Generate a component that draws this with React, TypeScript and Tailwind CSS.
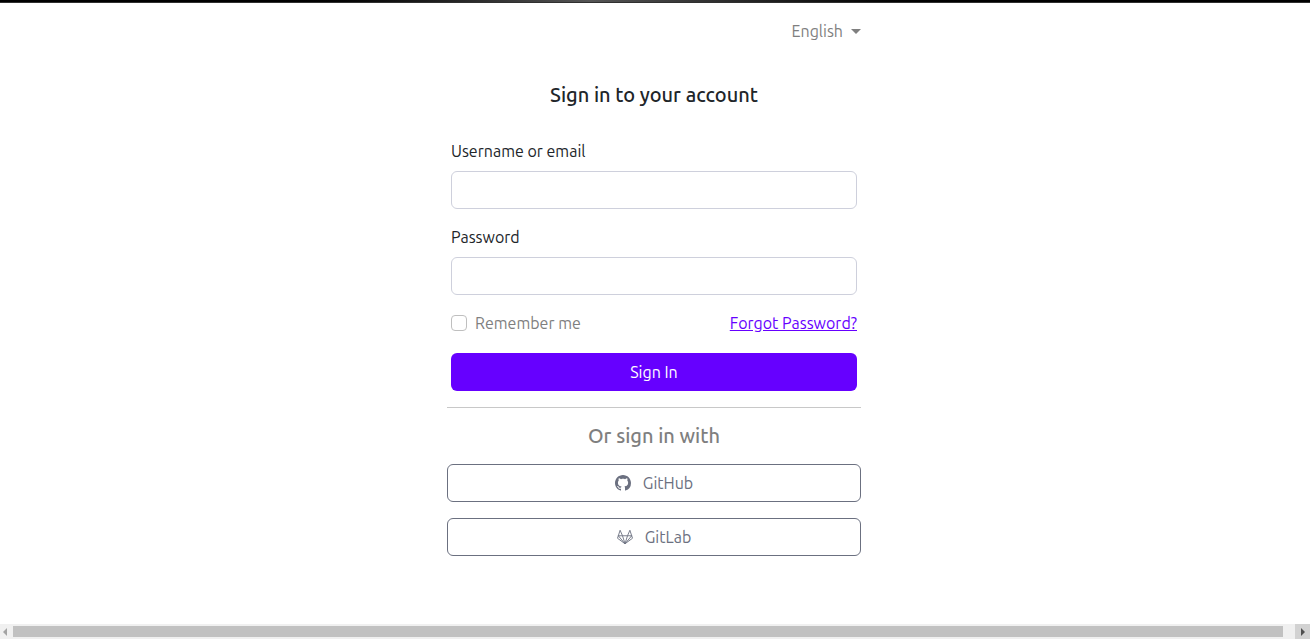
import { useState } from 'react';
import type { ReactNode } from 'react';
import { BsGithub } from 'react-icons/bs';

function GitLabIcon() {
  return (
    <svg viewBox="0 0 32 32" className="h-4 w-4" fill="none" stroke="currentColor" strokeWidth="1.8" strokeLinejoin="round" aria-hidden="true">
      <path d="M16 29.5 1 18.5 6.2 2.5 11 13.5H21L25.8 2.5 31 18.5Z" />
      <path d="M16 29.5 11 13.5M16 29.5 21 13.5M16 29.5 2.6 13.5H11M16 29.5 29.4 13.5H21" />
    </svg>
  );
}

function Field({ id, label, type }: { id: string; label: string; type: string }) {
  return (
    <div className="mb-4 flex flex-col gap-2">
      <label htmlFor={id}>{label}</label>
      <input
        id={id}
        type={type}
        className="h-[38px] w-full rounded-md border border-[#ced0dc] bg-white px-3 outline-none focus:border-[#6600ff]"
      />
    </div>
  );
}

function ProviderButton({ icon, name }: { icon: ReactNode; name: string }) {
  return (
    <button
      type="button"
      className="flex h-[38px] w-full items-center justify-center gap-3 rounded-md border border-[#6b7080] text-[#6b7080] hover:bg-gray-50"
    >
      {icon}
      {name}
    </button>
  );
}

export default function App() {
  const [language, setLanguage] = useState('English');
  return (
    <div className="flex min-h-screen flex-col bg-white font-['Ubuntu','Noto_Sans',sans-serif] text-base leading-6 text-[#212529]">
      <div className="h-[3px] border-b border-[#303030] bg-linear-to-r from-black from-20% via-[#555555] via-45% to-black to-75%" />
      <main className="flex-1 pr-0.5">
        <div className="mx-auto w-full max-w-[414px] pt-4">
          <div className="mb-10 flex justify-end">
            <label className="flex items-center gap-2 text-[#7f7f7f]">
              <select
                aria-label="Language"
                value={language}
                onChange={(event) => setLanguage(event.target.value)}
                className="field-sizing-content appearance-none bg-transparent outline-none"
              >
                <option>English</option>
              </select>
              <svg viewBox="0 0 10 5" className="h-[5px] w-2.5" fill="currentColor" aria-hidden="true">
                <path d="M0 0H10L5 5Z" />
              </svg>
            </label>
          </div>
          <h1 className="mb-8 text-center text-xl leading-6 font-medium">Sign in to your account</h1>
          <form className="px-1" onSubmit={(event) => event.preventDefault()}>
            <Field id="username" label="Username or email" type="text" />
            <Field id="password" label="Password" type="password" />
            <div className="mb-[18px] flex items-center justify-between">
              <label className="flex items-center gap-2 text-[#7f7f7f]">
                <input
                  type="checkbox"
                  className="h-4 w-4 appearance-none rounded-sm border border-[#bfbfbf] bg-white checked:bg-[#6600ff]"
                />
                Remember me
              </label>
              <a href="#forgot" className="text-[#6600ff] underline">
                Forgot Password?
              </a>
            </div>
            <button type="submit" className="h-[38px] w-full rounded-md bg-[#6600ff] text-white hover:bg-[#5700d9]">
              Sign In
            </button>
          </form>
          <hr className="my-4 border-[#c8c8c8]" />
          <h2 className="mb-4 text-center text-xl leading-6 font-medium text-[#7f7f7f]">Or sign in with</h2>
          <div className="flex flex-col gap-4 pb-8">
            <ProviderButton icon={<BsGithub className="h-4 w-4" aria-hidden="true" />} name="GitHub" />
            <ProviderButton icon={<GitLabIcon />} name="GitLab" />
          </div>
        </div>
      </main>
      <div className="flex h-[15px] items-center bg-[#f0f0f0]" aria-hidden="true">
        <div className="flex w-[13px] justify-start pl-[3px]">
          <svg viewBox="0 0 4 8" className="h-2 w-1" fill="#a3a3a3">
            <path d="M4 0V8L0 4Z" />
          </svg>
        </div>
        <div className="h-[11px] flex-1 bg-[#c1c1c1]" />
        <div className="ml-3 flex h-full w-[15px] items-center justify-center bg-[#d2d2d2]">
          <svg viewBox="0 0 4 8" className="h-2 w-1" fill="#505050">
            <path d="M0 0V8L4 4Z" />
          </svg>
        </div>
      </div>
    </div>
  );
}
